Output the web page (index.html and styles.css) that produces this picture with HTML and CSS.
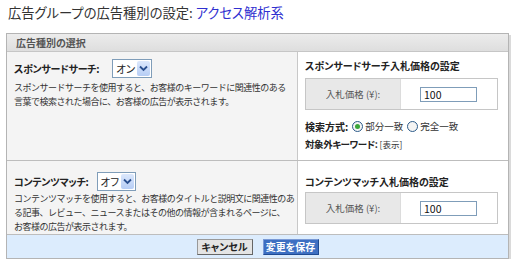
FILE: index.html
```html
<!DOCTYPE html>
<html>
<head>
    <meta charset="utf-8" />
    <title>広告種別の設定</title>
    <link rel="stylesheet" href="styles.css">
</head>
<body>
<h1 class="title">広告グループの広告種別の設定: <a class="titleLink" href="#">アクセス解析系</a></h1>
<div class="panel">
    <div class="panelHead">広告種別の選択</div>

    <div class="row rowSearch">
        <div class="cellLeft">
            <div class="opt">
                <span class="optLabel">スポンサードサーチ:</span>
                <span class="fakeSelect">オン<span class="arrow"><svg width="9" height="7" viewBox="0 0 9 7"><path d="M1 1.5 L4.5 5 L8 1.5" fill="none" stroke="#2a4f8f" stroke-width="1.8"/></svg></span></span>
            </div>
            <p class="desc">スポンサードサーチを使用すると、お客様のキーワードに関連性のある<br>言葉で検索された場合に、お客様の広告が表示されます。</p>
        </div>
        <div class="cellRight">
            <div class="bidTitle">スポンサードサーチ入札価格の設定</div>
            <div class="bidBox">
                <div class="bidLabel">入札価格 (¥):</div>
                <div class="bidField"><span class="bidInput">100</span></div>
            </div>
            <div class="match">
                <span class="strong">検索方式:</span>
                <span class="radio checked"></span><span class="radioText">部分一致</span>
                <span class="radio"></span><span class="radioText">完全一致</span>
            </div>
            <div class="exclude"><span class="strong tight">対象外キーワード:</span> <span class="small">[表示]</span></div>
        </div>
    </div>

    <div class="row rowContent">
        <div class="cellLeft">
            <div class="opt">
                <span class="optLabel">コンテンツマッチ:</span>
                <span class="fakeSelect">オフ<span class="arrow"><svg width="9" height="7" viewBox="0 0 9 7"><path d="M1 1.5 L4.5 5 L8 1.5" fill="none" stroke="#2a4f8f" stroke-width="1.8"/></svg></span></span>
            </div>
            <p class="desc">コンテンツマッチを使用すると、お客様のタイトルと説明文に関連性のあ<br>る記事、レビュー、ニュースまたはその他の情報が含まれるページに、<br>お客様の広告が表示されます。</p>
        </div>
        <div class="cellRight">
            <div class="bidTitle">コンテンツマッチ入札価格の設定</div>
            <div class="bidBox">
                <div class="bidLabel">入札価格 (¥):</div>
                <div class="bidField"><span class="bidInput">100</span></div>
            </div>
        </div>
    </div>

    <div class="panelFoot">
        <span class="btn">キャンセル</span>
        <span class="btn btnPrimary">変更を保存</span>
    </div>
</div>
</body>
</html>
```
FILE: styles.css
```css
body {
    margin: 0; padding: 0 6px;
    font-family: "Noto Sans CJK JP", sans-serif;
    font-feature-settings: "palt";
    color: #333; font-size: 10px;
    background: #fff;
}
.title {
    margin: 0; height: 33px; line-height: 25px;
    font-size: 13.3px; font-weight: normal; color: #333;
    padding-left: 2px;
}
.titleLink {
    color: #3030d0; text-decoration: none;
}
.panel {
    width: 501px;
    border: 1px solid #b4b4b4;
    box-shadow: 2px 2px 0 #dadada;
}
.panelHead {
    height: 17px; line-height: 17px;
    padding-left: 9px;
    background: linear-gradient(#ececec, #dedede);
    border-bottom: 1px solid #c6c6c6;
    color: #555; font-weight: bold; font-size: 10px;
}
.row {
    display: grid;
    grid-template-columns: 291px 1fr;
    border-bottom: 1px solid #bdbdbd;
}
.cellLeft {
    background: #f4f4f4;
    border-right: 1px solid #c8c8c8;
    padding: 7px 0 0 7px;
}
.cellRight {
    padding: 7px 10px 0 7px;
}
.rowSearch { height: 108px; }
.rowContent { height: 73px; }
.rowContent .cellLeft { padding-top: 11px; }
.rowContent .cellRight { padding-top: 14px; }

.opt {
    display: flex; align-items: center; gap: 13px;
    height: 19px;
}
.rowContent .opt { gap: 8px; }
.optLabel {
    font-weight: bold; font-size: 10px; letter-spacing: -0.3px; color: #222;
}
.fakeSelect {
    display: flex; align-items: center; justify-content: space-between;
    height: 17px; padding-left: 3px;
    border: 1px solid #7f9db9; background: #fff;
    font-size: 10.5px; color: #222; gap: 2px;
}
.arrow {
    display: flex; align-items: center; justify-content: center;
    width: 13px; height: 15px; margin-right: 1px;
    background: linear-gradient(#dce8fc, #b6cdf5);
    border-radius: 2px;
}
.desc {
    margin: 3px 0 0; line-height: 14px;
    font-size: 9px; letter-spacing: -0.5px;
    font-feature-settings: normal;
    white-space: nowrap; color: #333;
}
.rowContent .desc { margin-top: 1px; }

.bidTitle {
    font-weight: bold; font-size: 10px; line-height: 14px; color: #222;
}
.bidBox {
    display: grid; grid-template-columns: 95px 1fr;
    height: 30px; margin-top: 5px;
    border: 1px solid #c6c6c6;
}
.rowContent .bidBox { margin-top: 3px; }
.bidLabel {
    background: #e8e8e8; border-right: 1px solid #dcdcdc;
    display: flex; align-items: center; justify-content: center;
    color: #555; font-size: 9.5px;
}
.bidField {
    display: flex; align-items: center; padding-left: 19px; padding-top: 1px;
}
.bidInput {
    width: 52px; height: 13px; line-height: 13px; padding-left: 3px;
    border: 1px solid #7f9db9; background: #fff;
    font-size: 10.5px; color: #111;
}
.match {
    display: flex; align-items: center;
    height: 18px; margin-top: 7px;
}
.strong {
    font-weight: bold; font-size: 10px; color: #222;
}
.tight { font-size: 9.5px; letter-spacing: -0.4px; }
.radio {
    width: 9px; height: 9px; border-radius: 50%;
    border: 1px solid #2c5b8a; background: #f4f4f4;
    margin: 0 2px 0 4px;
    display: inline-flex; align-items: center; justify-content: center;
}
.radio.checked::after {
    content: ""; width: 5px; height: 5px; border-radius: 50%;
    background: #3aa63a;
}
.radioText { color: #333; font-size: 9.5px; }
.exclude {
    height: 14px; line-height: 14px; margin-top: 2px;
}
.small { font-size: 8.5px; color: #333; }

.panelFoot {
    height: 23px;
    background: #dcecfd;
    display: flex; align-items: center; justify-content: center; gap: 10px;
}
.btn {
    width: 54px; height: 14px; line-height: 14px;
    text-align: center; font-weight: bold; font-size: 10px;
    border: 1px solid #999; border-right-color: #666; border-bottom-color: #666;
    background: #e4e4e4; color: #222;
}
.btnPrimary {
    background: #3d6fc2; color: #fff;
    border-color: #7a9ad6 #1f4a92 #1f4a92 #7a9ad6;
}
```
